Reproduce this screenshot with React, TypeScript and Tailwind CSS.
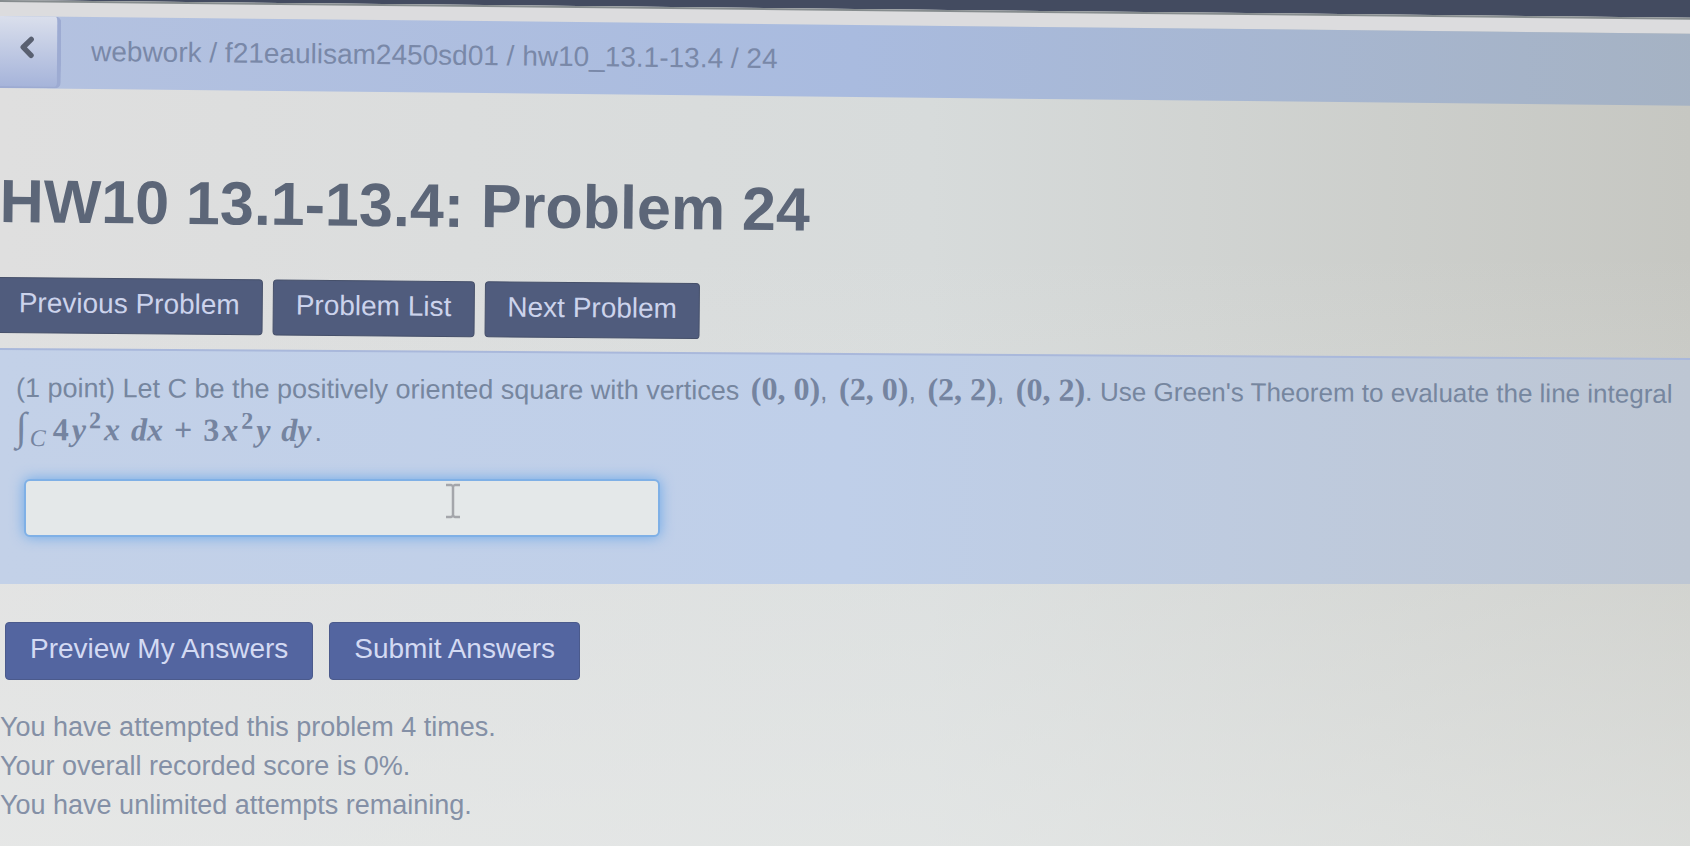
import { ChevronLeft } from "lucide-react";

const crumbs = ["webwork", "f21eaulisam2450sd01", "hw10_13.1-13.4"];

const vertices = [
    [0, 0],
    [2, 0],
    [2, 2],
    [0, 2],
];

const attempts = [
    "You have attempted this problem 4 times.",
    "Your overall recorded score is 0%.",
    "You have unlimited attempts remaining.",
];

function Breadcrumb() {
    return (
        <header className="-mr-4 origin-top-left rotate-[0.6deg]">
            <div className="-mt-8 h-8 bg-[#434b60]" />
            <div className="h-4 border-t-2 border-[#868c8e] bg-[#dcdcde]" />
            <nav
                aria-label="Breadcrumb"
                className="flex h-[72px] items-center bg-linear-to-r from-[#b4c2e0] via-[#a9bbdf] to-[#a5b2c3]"
            >
                <button
                    type="button"
                    aria-label="Back"
                    className="flex h-full w-[62px] items-center rounded-r-md border-r-4 border-b-2 border-[#9dabd2] bg-linear-to-b from-[#dadfec] to-[#a6b4da] pl-3 pb-2"
                >
                    <ChevronLeft size={32} strokeWidth={4} className="text-[#596071]" />
                </button>
                <ol className="flex pb-[2px] pl-[30px] text-[28px] leading-9 text-[#7988a8]">
                    {crumbs.map((crumb) => (
                        <li key={crumb} className="whitespace-pre">
                            <a href="#">{crumb}</a>
                            {" / "}
                        </li>
                    ))}
                    <li aria-current="page">24</li>
                </ol>
            </nav>
        </header>
    );
}

function NavButton({ children }: { children: string }) {
    return (
        <button
            type="button"
            className="h-14 rounded-sm border border-[#46506a] bg-[#505c7d] px-[22px] pb-1 text-[28px] leading-9 text-[#ccd3ec]"
        >
            {children}
        </button>
    );
}

function SubmitButton({ children }: { children: string }) {
    return (
        <button
            type="submit"
            className="h-[58px] rounded-sm border border-[#4b5a8c] bg-[#5365a0] px-6 pb-1 text-[28px] leading-9 text-[#d3daf3]"
        >
            {children}
        </button>
    );
}

function LineIntegral() {
    return (
        <p className="flex h-10 items-baseline gap-[3px] font-['Liberation_Serif',serif] text-[32px] leading-10 font-bold text-[#7584a0]">
            <span className="text-[40px] leading-10 font-normal">∫</span>
            <sub className="text-[24px] leading-none font-normal italic">C</sub>
            <span className="ml-1">4</span>
            <i>y</i>
            <sup className="text-[24px] leading-none">2</sup>
            <i>x</i>
            <i className="ml-2">dx</i>
            <span className="mx-2">+</span>
            <span>3</span>
            <i>x</i>
            <sup className="text-[24px] leading-none">2</sup>
            <i>y</i>
            <i className="ml-2">dy</i>
            <span className="font-['Liberation_Sans',sans-serif] text-[27px] font-normal">.</span>
        </p>
    );
}

function IBeam() {
    return (
        <svg
            aria-hidden="true"
            viewBox="0 0 18 36"
            className="absolute top-1 left-[420px] h-9 w-[18px] text-[#a4a6ab]"
            fill="none"
            stroke="currentColor"
            strokeWidth="2.5"
        >
            <path d="M2 2h5l2 1 2-1h5M9 3v30M2 34h5l2-1 2 1h5" />
        </svg>
    );
}

function ProblemPanel() {
    return (
        <section className="bg-[#a9b8db] pt-[2px] [clip-path:polygon(0_0,100%_10px,100%_100%,0_100%)]">
            <div className="h-[234px] bg-linear-to-r from-[#c3d1e8] via-[#bfcfe9] to-[#bdc6d3] px-4 pt-[17px] [clip-path:polygon(0_0,100%_10px,100%_100%,0_100%)]">
                <div className="origin-top-left rotate-[0.2deg] text-[#76869f]">
                    <p className="flex items-baseline text-[27px] leading-[38px] whitespace-pre">
                        (1 point) Let C be the positively oriented square with vertices{" "}
                        {vertices.map(([x, y], i) => (
                            <span key={i} className="ml-1">
                                <span className="font-['Liberation_Serif',serif] text-[32px] font-bold text-[#7584a0]">
                                    ({x}, {y})
                                </span>
                                {i < 3 ? ", " : ". "}
                            </span>
                        ))}
                        <span className="text-[26px]">
                            Use Green's Theorem to evaluate the line integral
                        </span>
                    </p>
                    <LineIntegral />
                </div>
                <div className="relative mt-8 ml-2 w-[636px]">
                    <input
                        type="text"
                        aria-label="Answer"
                        className="h-[58px] w-full rounded-md border-2 border-[#7fb0e6] bg-[#e4e8e9] px-3 text-[27px] text-[#76869f] shadow-[0_0_14px_#6ea9e8] outline-none"
                    />
                    <IBeam />
                </div>
            </div>
        </section>
    );
}

function App() {
    return (
        <div className="min-h-screen overflow-hidden bg-[linear-gradient(to_bottom,transparent_30%,rgba(234,236,235,0.6)),linear-gradient(to_right,#dfdfdf,#d7dbdb_55%,#c6c7c2)] font-['Liberation_Sans',Arial,sans-serif]">
            <Breadcrumb />

            <h1 className="mt-[77px] origin-top-left rotate-[0.6deg] text-[61px] leading-[72px] font-bold text-[#5c6678]">
                HW10 13.1-13.4: Problem 24
            </h1>

            <div className="mt-10 -ml-1 flex origin-top-left rotate-[0.5deg] gap-[10px]">
                <NavButton>Previous Problem</NavButton>
                <NavButton>Problem List</NavButton>
                <NavButton>Next Problem</NavButton>
            </div>

            <form className="mt-[15px]" onSubmit={(e) => e.preventDefault()}>
                <ProblemPanel />

                <div className="mt-[38px] ml-[5px] flex gap-4">
                    <SubmitButton>Preview My Answers</SubmitButton>
                    <SubmitButton>Submit Answers</SubmitButton>
                </div>
            </form>

            <div className="mt-7 text-[27px] leading-[39px] text-[#8490a6]">
                {attempts.map((line) => (
                    <p key={line}>{line}</p>
                ))}
            </div>
        </div>
    );
}

export default App;
